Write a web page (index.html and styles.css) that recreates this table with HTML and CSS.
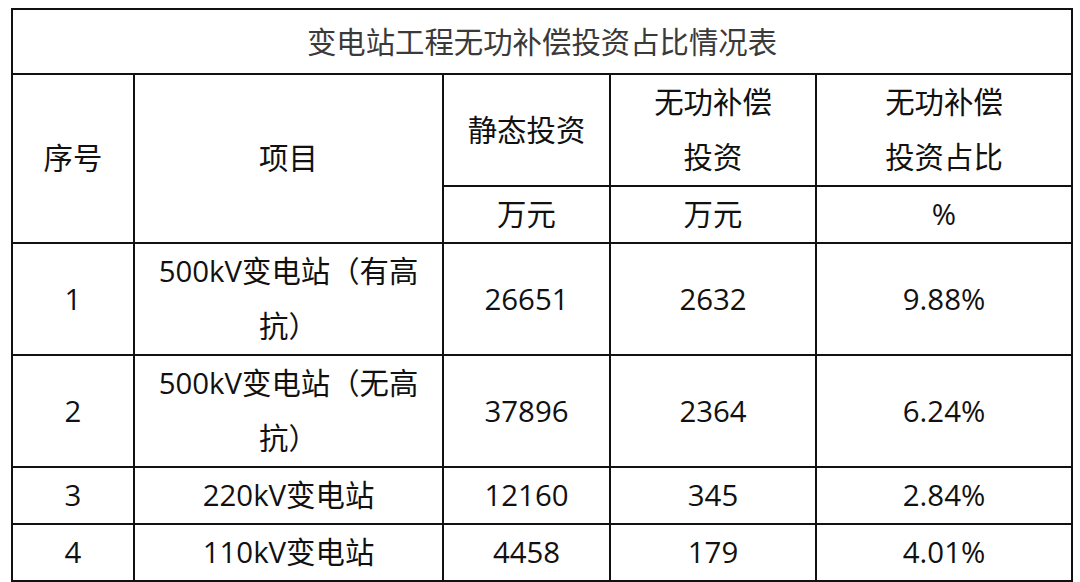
FILE: index.html
```html
<!DOCTYPE html>
<html lang="zh-CN">
<head>
<meta charset="utf-8">
<title>变电站工程无功补偿投资占比情况表</title>
<link rel="stylesheet" href="styles.css">
</head>
<body>
<div class="page">
  <table class="report">
    <colgroup>
      <col class="c-no">
      <col class="c-item">
      <col class="c-static">
      <col class="c-comp">
      <col class="c-ratio">
    </colgroup>
    <tr class="r-title">
      <td class="title" colspan="5">变电站工程无功补偿投资占比情况表</td>
    </tr>
    <tr class="r-tall">
      <td rowspan="2">序号</td>
      <td rowspan="2">项目</td>
      <td>静态投资</td>
      <td>无功补偿<br>投资</td>
      <td>无功补偿<br>投资占比</td>
    </tr>
    <tr class="r-short">
      <td>万元</td>
      <td>万元</td>
      <td>%</td>
    </tr>
    <tr class="r-tall">
      <td>1</td>
      <td class="item">500kV变电站（有高抗）</td>
      <td>26651</td>
      <td>2632</td>
      <td>9.88%</td>
    </tr>
    <tr class="r-tall">
      <td>2</td>
      <td class="item">500kV变电站（无高抗）</td>
      <td>37896</td>
      <td>2364</td>
      <td>6.24%</td>
    </tr>
    <tr class="r-short">
      <td>3</td>
      <td class="item">220kV变电站</td>
      <td>12160</td>
      <td>345</td>
      <td>2.84%</td>
    </tr>
    <tr class="r-last">
      <td>4</td>
      <td class="item">110kV变电站</td>
      <td>4458</td>
      <td>179</td>
      <td>4.01%</td>
    </tr>
  </table>
</div>
</body>
</html>
```

FILE: styles.css
```css
html, body {
  margin: 0;
  padding: 0;
  background: #ffffff;
}

.page {
  padding: 8px 0 0 11px;
}

.report {
  border-collapse: collapse;
  table-layout: fixed;
  width: 1060px;
  font-family: "Open Sans", "Noto Sans CJK SC", sans-serif;
  font-size: 29.4px;
  color: #111111;
}

.c-no { width: 122px; }
.c-item { width: 309px; }
.c-static { width: 167px; }
.c-comp { width: 206px; }
.c-ratio { width: 256px; }

.report td {
  border: 2px solid #111111;
  text-align: center;
  vertical-align: middle;
  padding: 0 16px;
  line-height: 55px;
  box-sizing: border-box;
}

.report td.item {
  padding: 0 14px;
}

.r-title { height: 65px; }
.r-tall { height: 110px; }
.r-short { height: 56px; }
.r-last { height: 53px; }

.report td.title {
  color: #3a3a3a;
  line-height: 40px;
}
```
